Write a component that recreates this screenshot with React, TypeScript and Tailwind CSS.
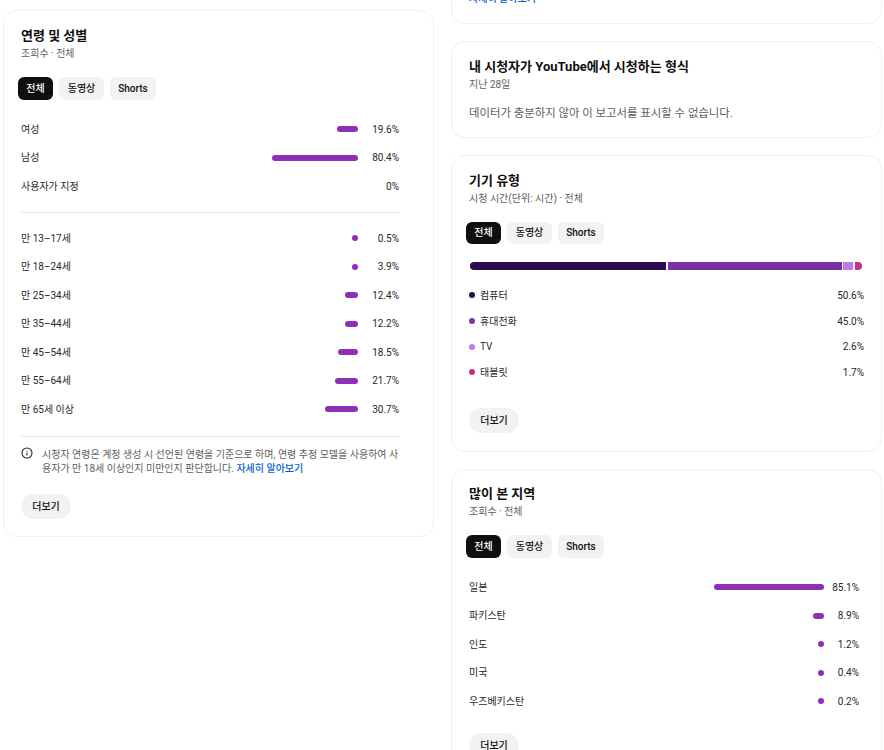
import { Info } from "lucide-react";

const gender = [
  { label: "여성", value: 19.6 },
  { label: "남성", value: 80.4 },
  { label: "사용자가 지정", value: 0 },
];

const ages = [
  { label: "만 13–17세", value: 0.5 },
  { label: "만 18–24세", value: 3.9 },
  { label: "만 25–34세", value: 12.4 },
  { label: "만 35–44세", value: 12.2 },
  { label: "만 45–54세", value: 18.5 },
  { label: "만 55–64세", value: 21.7 },
  { label: "만 65세 이상", value: 30.7 },
];

const devices = [
  { label: "컴퓨터", value: "50.6%", dot: "bg-[#2b0a4d]" },
  { label: "휴대전화", value: "45.0%", dot: "bg-[#7b30a8]" },
  { label: "TV", value: "2.6%", dot: "bg-[#c07be8]" },
  { label: "태블릿", value: "1.7%", dot: "bg-[#cc2e80]" },
];

const regions = [
  { label: "일본", value: 85.1 },
  { label: "파키스탄", value: 8.9 },
  { label: "인도", value: 1.2 },
  { label: "미국", value: 0.4 },
  { label: "우즈베키스탄", value: 0.2 },
];

function Tabs() {
  return (
    <div className="flex gap-[6px] text-[10px] font-medium">
      <button className="h-[22.5px] w-[35px] rounded-[6px] bg-[#0f0f0f] text-white">전체</button>
      <button className="h-[22.5px] w-[45px] rounded-[6px] bg-[#f2f2f2] text-[#0f0f0f]">동영상</button>
      <button className="h-[22.5px] w-[46px] rounded-[6px] bg-[#f2f2f2] text-[#0f0f0f]">Shorts</button>
    </div>
  );
}

function MoreButton() {
  return (
    <button className="h-[25px] w-[50px] rounded-full bg-[#f2f2f2] text-[10px] font-medium text-[#0f0f0f]">
      더보기
    </button>
  );
}

function BarRow({ label, value, scale, valueWidth }: { label: string; value: number; scale: number; valueWidth: string }) {
  return (
    <div className="flex h-[28.5px] items-center text-[10px] text-[#282828]">
      <span className="flex-1">{label}</span>
      {value > 0 && (
        <div className="h-[6px] rounded-full bg-[#8e2fb8]" style={{ width: Math.max(6, value * scale) }} />
      )}
      <span className={`${valueWidth} text-right`}>{value}%</span>
    </div>
  );
}

export default function App() {
  return (
    <div className="flex h-[750px] w-[884px] overflow-hidden bg-white pl-[3px] font-[Roboto,'Noto_Sans_CJK_KR',sans-serif]">
      <div className="w-[431px] pt-[10px]">
        <section className="h-[527px] rounded-[14px] border border-[#f0f0f0] pt-[16px] pl-[17px] pr-[34px]">
          <h2 className="text-[13px] leading-[18px] font-bold text-[#0f0f0f]">연령 및 성별</h2>
          <p className="mt-[1px] text-[10px] leading-[16px] text-[#606060]">조회수 · 전체</p>
          <div className="mt-[15px] -ml-[3px]">
            <Tabs />
          </div>
          <div className="mt-[15.5px]">
            {gender.map((g) => (
              <BarRow key={g.label} {...g} scale={1.07} valueWidth="w-[41px]" />
            ))}
          </div>
          <div className="mt-[11px] border-t border-[#e5e5e5]" />
          <div className="mt-[11.5px]">
            {ages.map((a) => (
              <BarRow key={a.label} {...a} scale={1.07} valueWidth="w-[41px]" />
            ))}
          </div>
          <div className="mt-[12px] border-t border-[#e5e5e5]" />
          <div className="mt-[11px] flex gap-[9px] text-[10px] leading-[14.5px] text-[#606060]">
            <Info size={12} strokeWidth={2.2} className="mt-[-1px] shrink-0 text-[#282828]" />
            <p>
              시청자 연령은 계정 생성 시 선언된 연령을 기준으로 하며, 연령 추정 모델을 사용하여 사용자가 만 18세 이상인지 미만인지 판단합니다.{" "}
              <a className="font-medium text-[#065fd4]">자세히 알아보기</a>
            </p>
          </div>
          <div className="mt-[16px]">
            <MoreButton />
          </div>
        </section>
      </div>

      <div className="ml-[17px] flex w-[431px] flex-col gap-[17px]">
        <section className="-mt-[40px] h-[64px] shrink-0 rounded-[14px] border border-[#f0f0f0] pt-[24px] pl-[17px]">
          <a className="text-[10px] font-medium text-[#065fd4]">자세히 알아보기</a>
        </section>

        <section className="h-[97px] shrink-0 rounded-[14px] border border-[#f0f0f0] pt-[16px] pl-[17px]">
          <h2 className="text-[13px] leading-[18px] font-bold text-[#0f0f0f]">내 시청자가 YouTube에서 시청하는 형식</h2>
          <p className="mt-[1px] text-[10px] leading-[16px] text-[#606060]">지난 28일</p>
          <p className="mt-[11.5px] text-[11.4px] leading-[17px] text-[#606060]">데이터가 충분하지 않아 이 보고서를 표시할 수 없습니다.</p>
        </section>

        <section className="h-[297px] shrink-0 rounded-[14px] border border-[#f0f0f0] pt-[16px] pl-[17px] pr-[17px]">
          <h2 className="text-[13px] leading-[18px] font-bold text-[#0f0f0f]">기기 유형</h2>
          <p className="mt-[1px] text-[10px] leading-[16px] text-[#606060]">시청 시간(단위: 시간) · 전체</p>
          <div className="mt-[14.5px] -ml-[3px]">
            <Tabs />
          </div>
          <div className="mt-[17.5px] ml-[1px] mr-[2px] flex h-[8px] gap-[1.5px] overflow-hidden rounded-full">
            <div className="w-[196px] bg-[#2b0a4d]" />
            <div className="w-[174px] bg-[#7b30a8]" />
            <div className="w-[10px] bg-[#c07be8]" />
            <div className="flex-1 bg-[#cc2e80]" />
          </div>
          <div className="mt-[13px]">
            {devices.map((d) => (
              <div key={d.label} className="flex h-[25.7px] items-center text-[10px] text-[#282828]">
                <span className={`mr-[5px] size-[6px] rounded-full ${d.dot}`} />
                <span className="flex-1">{d.label}</span>
                <span>{d.value}</span>
              </div>
            ))}
          </div>
          <div className="mt-[22px]">
            <MoreButton />
          </div>
        </section>

        <section className="h-[320px] shrink-0 rounded-[14px] border border-[#f0f0f0] pt-[15px] pl-[17px] pr-[22px]">
          <h2 className="text-[13px] leading-[18px] font-bold text-[#0f0f0f]">많이 본 지역</h2>
          <p className="mt-[1px] text-[10px] leading-[16px] text-[#606060]">조회수 · 전체</p>
          <div className="mt-[15px] -ml-[3px]">
            <Tabs />
          </div>
          <div className="mt-[15.5px]">
            {regions.map((r) => (
              <BarRow key={r.label} {...r} scale={1.29} valueWidth="w-[35px]" />
            ))}
          </div>
          <div className="mt-[16px]">
            <MoreButton />
          </div>
        </section>
      </div>
    </div>
  );
}
